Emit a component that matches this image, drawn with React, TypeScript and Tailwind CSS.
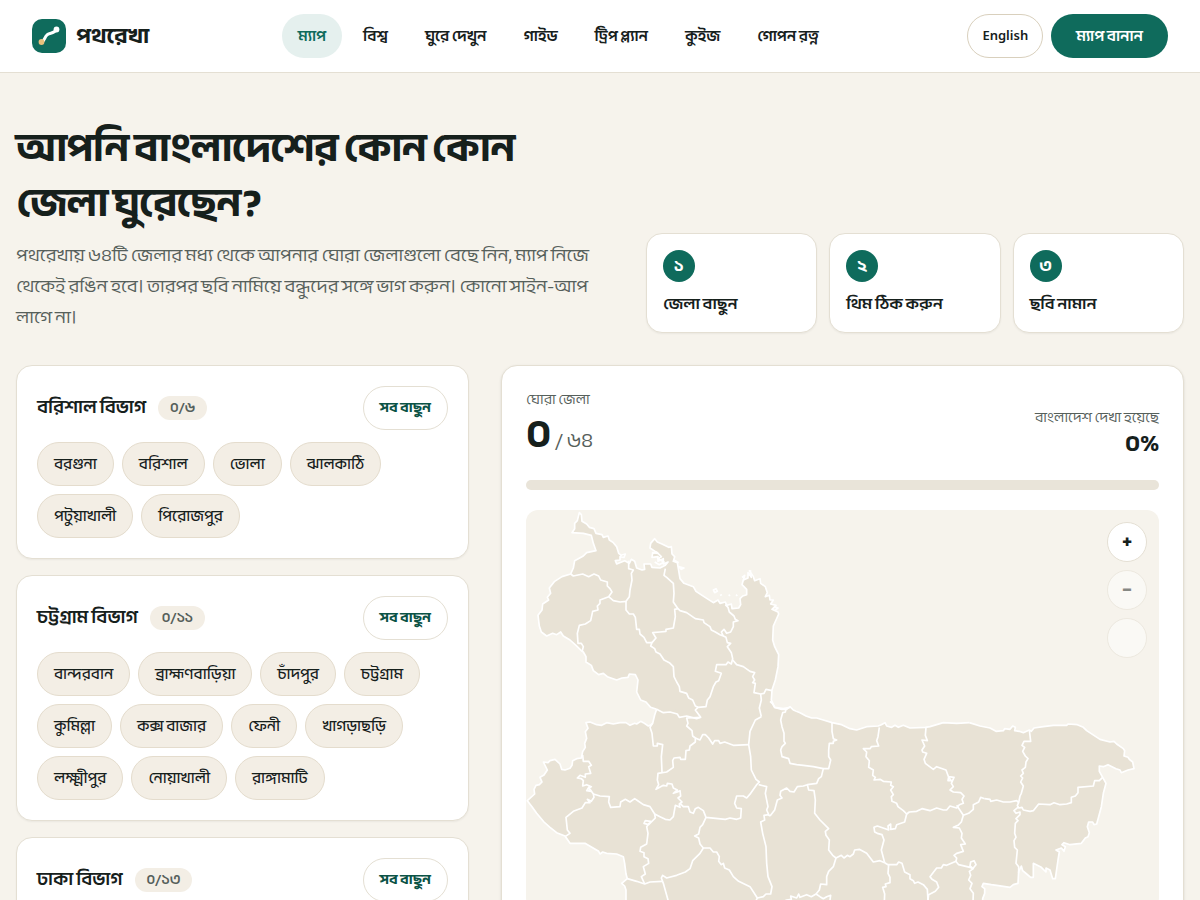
import { useState } from "react";

type Division = {
  name: string;
  total: string;
  districts: string[];
};

const navItems = ["ম্যাপ", "বিশ্ব", "ঘুরে দেখুন", "গাইড", "ট্রিপ প্ল্যান", "কুইজ", "গোপন রত্ন"];

const steps = [
  { number: "১", label: "জেলা বাছুন" },
  { number: "২", label: "থিম ঠিক করুন" },
  { number: "৩", label: "ছবি নামান" },
];

const divisions: Division[] = [
  {
    name: "বরিশাল বিভাগ",
    total: "৬",
    districts: ["বরগুনা", "বরিশাল", "ভোলা", "ঝালকাঠি", "পটুয়াখালী", "পিরোজপুর"],
  },
  {
    name: "চট্টগ্রাম বিভাগ",
    total: "১১",
    districts: [
      "বান্দরবান",
      "ব্রাহ্মণবাড়িয়া",
      "চাঁদপুর",
      "চট্টগ্রাম",
      "কুমিল্লা",
      "কক্স বাজার",
      "ফেনী",
      "খাগড়াছড়ি",
      "লক্ষ্মীপুর",
      "নোয়াখালী",
      "রাঙ্গামাটি",
    ],
  },
  { name: "ঢাকা বিভাগ", total: "১৩", districts: [] },
];

// Each region has its own origin; coast is the open shoreline, close is what fills it in.
const regions = [
  {
    id: "north-west",
    transform: "translate(-18 -30)",
    coast:
      "M410,628 392,622 378,606 362,600 350,576 354,540 346,524 328,522 324,532 306,534 290,540 262,530 250,520 236,524 220,512 214,496 198,486 198,470 190,456 184,452 168,436 150,420 130,408 122,396 110,404 98,400 80,408 64,396 58,378 54,346 66,330 68,312 86,300 82,292 92,280 88,264 104,244 126,230 152,222 160,204 164,182 190,168 200,158 228,152 220,130 214,106 190,100 156,98 164,86 164,70 172,62 178,38 184,44 186,64 200,72 208,82 222,86 228,100 246,104 250,112 264,108 268,120 280,128 290,140 296,160 304,166 316,162 312,172 300,170 300,180 286,182 290,192 314,182 328,190 334,178 344,184 350,204 366,210 374,208 372,192 392,192 396,202 420,204 436,196 444,186 430,192 430,176 414,184 414,170 396,172 398,158 414,160 402,152 390,144 392,130 404,116 412,126 426,132 446,142 454,140 456,162 464,170 460,184 472,188 474,200 480,236 492,250 520,260 528,274 552,290 580,308 594,300 600,310 616,306 620,316 634,312 636,326 656,324 662,314 660,296 668,288 680,284 680,268 666,254 670,240 684,234 684,218 694,232 690,214 700,230 704,242 720,236 722,250 736,260 742,278 736,290 748,286 750,300 760,300 752,312 768,316 756,328 774,336 776,342 760,378 758,420 764,440 776,464 774,500 766,540 756,570 754,600 764,622 790,626 810,622",
    close: "V660 H410 Z",
    borders: [
      "M152,222 160,228 188,222 206,230 222,222 236,228 242,240 262,246 262,258 270,266 276,276 266,290 240,300 240,310 232,318 234,330 218,334 212,362 196,372 178,376 172,400 174,430 184,430 190,440 186,456",
      "M266,290 280,302 300,306 318,304 328,290 330,270 336,240 334,220 340,210 326,206 326,182",
      "M318,304 318,330 328,342 340,342 346,352 350,388 358,388 360,402 372,412 380,428 396,428 392,438 404,446 408,456 420,462 432,480 448,488 460,500 462,530 470,546 478,560 480,574 500,580 506,594 518,600 526,618 534,622",
      "M396,428 408,414 398,398 420,396 438,394 438,388 460,384 466,350 464,328 474,326 460,306 462,280 460,250 440,232 432,226 436,206",
      "M474,326 480,332 500,338 526,356 550,360 552,368 570,380 574,390 586,396 600,404 610,408 604,396 612,388 620,400 632,396 640,380 640,366 654,362 646,358 642,348 628,336 624,322 616,314",
      "M610,408 618,412 622,428 632,430 622,440 634,458 638,476 634,492 624,486 618,494 590,494 586,514 604,520 596,542 588,546 580,560 570,590 562,600 558,620 534,622 526,630 542,652 530,656 500,648 478,652 472,642 450,636 430,638 410,628",
      "M638,480 650,494 670,500 690,514 704,518 698,530 704,540 698,548 706,550 702,578 722,582 732,580 738,568 756,572",
      "M722,582 724,600 718,624 724,650",
      "M580,270 l8,-4 4,8 -8,4Z M600,286 l6,-2 M626,284 l4,4 M648,284 l4,4 M476,200 l16,4 -8,4Z M462,180 l14,8 M396,160 l14,-4 14,14 -10,6 18,10 -14,8 -14,-8 M666,232 l8,-6 -4,16 M686,212 l8,2 M764,320 l10,4 -8,6",
    ],
  },
  {
    id: "south-west",
    transform: "translate(-18 540)",
    coast:
      "M410,58 404,75 398,100 390,106 385,108 370,98 362,94 350,102 344,100 330,106 318,98 300,98 280,102 260,98 245,106 230,104 210,96 198,98 204,115 196,125 200,145 194,160 196,172 188,185 184,204 170,206 158,212 156,226 150,235 135,240 125,238 120,222 105,208 90,212 84,218 70,216 82,240 72,255 60,262 66,276 58,284 48,286 42,298 44,312 22,332 36,350 50,370 72,396 90,412 110,428 135,438 150,460 195,460 236,484 240,492 248,486 260,490 290,492 310,500 314,520 318,552 322,566 305,580 314,588 318,600 318,660",
    close: "H830 V60 Z",
    borders: [
      "M542,82 500,84 504,100 500,108 516,122 518,138 526,144 526,156 510,168 508,180 498,182 496,208 482,208 480,202 462,204 458,212 460,232 440,246 414,250 412,270 416,284 408,298 430,286 440,288 442,280 456,282 460,294 472,300 460,310 472,306 480,302 482,318 474,324 486,336 478,342 480,352 466,346 460,380 450,390 436,388 420,380 404,372 390,350 370,344 350,330 344,326 330,336 316,328 302,336 300,350 272,352 266,336 268,320 240,318 220,312",
      "M188,195 190,214 206,214 214,226 206,230 212,250 196,252 196,262 180,256 172,264 184,266 190,272 188,288 200,284 214,290 206,296 214,304 200,302 206,292 220,312 222,322 214,334 202,328 210,338 196,338 186,354 160,364 138,382 142,420 150,430 135,440",
      "M398,100 390,112 396,130 400,168 412,168 412,160 428,164 424,200 426,246",
      "M526,144 540,150 548,134 556,134 566,144 578,162 584,152 596,152 600,160 614,156 640,166 686,164",
      "M724,80 706,90 690,124 686,164 692,200 694,240 708,268 718,276 710,284 692,310 680,324 670,318 650,318 644,340 650,354 664,356 662,384 650,388 630,384 616,388 558,382 550,362 535,352 526,356 520,370 510,366 505,350 490,350 480,340",
      "M558,382 548,404 540,412 536,432 524,438 536,444 540,462 550,474 540,490 518,512 510,536 496,546 470,556 440,564 428,556 424,564 430,580 444,630 446,660",
      "M426,574 390,576 374,582 350,574 322,566",
      "M404,372 406,384 386,404 372,400 376,392 392,394 380,410 384,430 380,462 362,472 360,484 372,488 372,500 384,506 386,520 370,530 376,552 364,560 374,582",
      "M550,474 570,474 580,486 590,486 598,500 596,514 604,524 610,520 614,534 628,540 640,560 656,574 690,590 712,624 704,640",
      "M716,284 740,290 736,310 744,350 740,360 746,374 732,376 734,390 722,396 728,430 738,470 740,520 744,560 756,590 752,612 738,612 730,620 712,624",
      "M744,374 750,378",
    ],
  },
  {
    id: "central",
    transform: "translate(732 540)",
    coast:
      "M0,34 8,42 14,52 35,58 50,58 60,50 70,60 90,68 108,78 125,84 140,84 160,90 186,98 215,104 240,116 260,120 290,110 325,108 334,104 345,98 350,108 365,112 375,106 385,112 400,106 420,114 466,112 480,110 500,104 520,98 560,100 598,98",
    close: "V660 H0 Z",
    borders: [
      "M48,56 46,66 38,68 32,90 36,110 42,130 42,154 46,160 36,170 32,180 36,200 56,206 60,220 80,224 100,226 130,230 160,236 154,260 146,266 140,280 112,284 100,288 82,290 72,306 60,304 50,294 32,304 30,316 36,324 22,330 14,360 0,378",
      "M186,98 186,124 190,146 200,150 190,154 190,160 178,160 176,180 176,200 182,210 176,236 160,236",
      "M112,284 116,300 132,302 136,330 134,370 150,390 176,416 166,424 168,436 178,450 176,480 188,496 198,504 214,496 222,504 232,496 240,500 250,492 254,480 268,478 290,490 310,516 330,512 344,518",
      "M328,112 324,140 320,152 326,168 304,170 300,176 280,176 290,186 288,200 298,212 296,232 310,240 308,256 316,262 312,270 330,268 340,274 364,276 362,286 370,290 362,300 370,314 364,320 366,334 380,340 384,350 400,362 410,372 404,396 380,404 376,416 362,418 362,402 354,408 356,420 346,416 322,408 312,412 314,426 322,430 336,434 342,450 334,480 344,518",
      "M410,372 418,366 440,364 456,356 480,362 500,354 520,360 530,360 540,348 560,354 568,344 580,340 576,328 582,318 572,308 550,306 540,300 550,290 544,280 552,262 536,260 534,272 544,272 536,262 528,240 500,230 490,238 466,220 462,208 470,190 458,186 456,180 464,168 456,150 472,152 466,136 468,112",
      "M560,346 568,358 580,376 596,370 610,358 610,344 626,336 632,322 644,326",
      "M580,376 574,396 564,406 550,412 568,414 576,430 574,444 586,462 572,464 580,484 560,490 552,496 560,504 558,514 530,526 520,524 514,534 500,534 480,560 486,568 500,576 506,592 496,604 476,614 474,630",
      "M556,512 566,524 600,532 608,536 618,524 612,512 602,516 600,528 610,536 598,544 602,556 596,570 606,580 600,596 610,610 608,660",
      "M344,518 354,524 380,524 386,516 396,520 404,546 420,554 420,566 430,572 434,580 444,576 460,584 472,598 474,630",
      "M356,524 354,550 360,562 360,578 346,582 348,590 338,592 344,612 342,660",
      "M198,504 190,530 176,544 170,560 170,584 152,582 148,600 138,612 124,620 110,614 90,622 86,612 80,624 62,618 64,628 50,630 30,640",
      "M138,612 150,620 160,626 170,620 182,616 180,630",
    ],
  },
  {
    id: "east",
    transform: "translate(1302 540)",
    coast:
      "M28,98 60,108 90,114 108,124 130,122 134,116 150,118 158,108 166,112 164,122 178,124 190,128 208,120 214,124 222,114 250,110 280,106 320,106 324,102 352,104 370,112 380,122 420,148 450,156 462,154 470,162 490,176 494,182 492,198 504,202 508,208 518,216 522,236 504,240 484,248 480,240 468,236 444,224 430,230 418,228 418,244 428,262 438,280 430,310 424,350 416,380 410,402 402,404 398,396 386,396 382,410 388,428 384,440 376,444 364,460 330,464 312,458 306,464 316,470 312,484 304,474 288,480 298,486 294,510 286,566 278,566 270,540 258,534 258,546 244,532 220,520 220,562 212,562 200,552 188,542 184,528 176,545 174,580 160,584 150,592 110,586 94,584 70,580 66,590 74,596 74,610 68,626 68,660",
    close: "H0 V98 Z",
    borders: [
      "M74,326 90,328 92,334 110,330 130,336 150,336 170,332 176,338",
      "M208,120 212,154 192,154 186,166 194,172 188,184 196,198 204,206 198,216 196,232 186,240 190,250 182,258 188,264 182,276 190,288 184,310 180,318 176,338 172,346 176,354 186,352 190,360 210,364 220,362 236,342 270,344 282,338 300,344 320,342 334,338 334,322 346,318 354,308 354,292 400,288 404,272 418,272 428,262",
      "M176,350 162,362 168,370 180,366 180,374 168,386 174,392 166,400 164,430 168,442 162,452 164,472 172,480 168,520 176,530 176,550",
    ],
  },
];

const Logo = () => (
  <svg viewBox="0 0 34 34" className="size-[34px]" aria-hidden="true">
    <rect width="34" height="34" rx="10" fill="#0f6b5c" />
    <path
      d="M9.5 23 C13 22 12 18 15.5 15.5 C18 13.5 22 15 24.5 10.5"
      fill="none"
      stroke="#fff"
      strokeWidth="3"
      strokeLinecap="round"
    />
    <circle cx="24.5" cy="10.5" r="2.9" fill="#fff" />
    <circle cx="9.5" cy="23" r="2.9" fill="#e9c07c" />
  </svg>
);

const Navbar = () => (
  <header className="border-b border-[#e4dfd3] bg-white">
    <div className="flex h-[72px] items-center justify-between px-8">
      <a href="#" className="flex items-center gap-2.5 text-[22px] font-bold">
        <Logo />
        পথরেখা
      </a>
      <nav className="flex items-center gap-[5px]">
        {navItems.map((item, index) => (
          <a
            key={item}
            href="#"
            className={
              index === 0
                ? "flex h-11 items-center rounded-full bg-[#e5f0ee] px-4 text-[15px] font-semibold text-[#0f6b5c]"
                : "flex h-11 items-center rounded-full px-4 text-[15px] font-semibold"
            }
          >
            {item}
          </a>
        ))}
      </nav>
      <div className="flex items-center gap-2">
        <button
          type="button"
          className="h-11 rounded-full border border-[#d9d0bd] px-3.5 font-['Noto_Sans',sans-serif] text-[13px] font-semibold"
        >
          English
        </button>
        <button type="button" className="h-11 rounded-full bg-[#0f6b5c] px-[25px] text-[15px] font-semibold text-white">
          ম্যাপ বানান
        </button>
      </div>
    </div>
  </header>
);

const DivisionCard = ({ name, total, districts }: Division) => (
  <section className="flex flex-col gap-3 rounded-2xl border border-[#e4dfd3] bg-white p-5 shadow-xs">
    <div className="flex items-center justify-between">
      <div className="flex items-center gap-3">
        <h2 className="text-lg font-semibold">{name}</h2>
        <span className="rounded-full bg-[#f3eee5] px-3 text-sm leading-6 font-semibold text-[#56605b]">০/{total}</span>
      </div>
      <button
        type="button"
        className="h-11 rounded-full border border-[#e4dfd3] px-4 text-sm font-bold text-[#0b5346]"
      >
        সব বাছুন
      </button>
    </div>
    <div className="flex flex-wrap gap-2">
      {districts.map((district) => (
        <button
          key={district}
          type="button"
          className="h-11 rounded-full border border-[#e4dccd] bg-[#f3eee5] px-4 text-[15px] font-medium"
        >
          {district}
        </button>
      ))}
    </div>
  </section>
);

const DistrictMap = () => (
  <svg viewBox="0 0 1899 1200" className="block w-full" role="img" aria-label="বাংলাদেশ">
    <g fill="#e8e2d5">
      {regions.map((region) => (
        <path key={region.id} transform={region.transform} d={`${region.coast} ${region.close}`} />
      ))}
    </g>
    <g fill="none" stroke="#fff" strokeWidth="5" strokeLinejoin="round">
      {regions.map((region) => (
        <g key={region.id} transform={region.transform}>
          <path d={region.coast} />
          {region.borders.map((border) => (
            <path key={border} d={border} />
          ))}
        </g>
      ))}
    </g>
  </svg>
);

const MapPanel = () => {
  const [zoom, setZoom] = useState(1);
  const zoomButton =
    "size-10 rounded-full border border-[#e4dfd3] bg-white text-xl leading-none font-bold disabled:opacity-50";

  return (
    <section className="rounded-2xl border border-[#e4dfd3] bg-white p-6 shadow-sm">
      <div className="flex items-end justify-between">
        <div>
          <p className="text-sm leading-5 text-[#56605b]">ঘোরা জেলা</p>
          <p className="text-[40px] leading-[50px] font-bold">
            ০<span className="text-xl font-normal text-[#56605b]"> / ৬৪</span>
          </p>
        </div>
        <div className="text-right">
          <p className="text-sm leading-5 text-[#56605b]">বাংলাদেশ দেখা হয়েছে</p>
          <p className="text-2xl leading-8 font-bold">০%</p>
        </div>
      </div>
      <div className="my-5 h-2.5 rounded-full bg-[#e9e4d9]" />
      <div className="relative overflow-hidden rounded-xl bg-[#f6f3ec]">
        <DistrictMap />
        <div className="absolute top-3 right-3 flex flex-col gap-2">
          <button type="button" className={zoomButton} onClick={() => setZoom(zoom + 1)}>
            +
          </button>
          <button type="button" className={zoomButton} disabled={zoom === 1} onClick={() => setZoom(zoom - 1)}>
            −
          </button>
          <button type="button" className={zoomButton} disabled={zoom === 1} onClick={() => setZoom(1)} />
        </div>
      </div>
    </section>
  );
};

const App = () => (
  <div className="min-h-screen bg-[#f6f3ec] font-['Anek_Bangla','Baloo_Da_2','Noto_Sans_Bengali','Noto_Sans',sans-serif] text-[#16201c]">
    <Navbar />
    <main className="px-4 pt-12 pb-8">
      <div className="grid grid-cols-[10fr_9fr] items-end gap-8">
        <div>
          <h1 className="max-w-[580px] text-[40px] leading-[55px] font-bold tracking-tight">
            আপনি বাংলাদেশের কোন কোন জেলা ঘুরেছেন?
          </h1>
          <p className="mt-[9px] text-lg leading-[31px] text-[#56605b]">
            পথরেখায় ৬৪টি জেলার মধ্য থেকে আপনার ঘোরা জেলাগুলো বেছে নিন, ম্যাপ নিজে থেকেই রঙিন হবে। তারপর ছবি নামিয়ে
            বন্ধুদের সঙ্গে ভাগ করুন। কোনো সাইন-আপ লাগে না।
          </p>
        </div>
        <ol className="grid grid-cols-3 gap-3">
          {steps.map((step) => (
            <li key={step.number} className="rounded-2xl border border-[#e4dfd3] bg-white p-4 shadow-xs">
              <span className="flex size-8 items-center justify-center rounded-full bg-[#0f6b5c] font-bold text-white">
                {step.number}
              </span>
              <p className="mt-2.5 text-base leading-6 font-semibold">{step.label}</p>
            </li>
          ))}
        </ol>
      </div>

      <div className="mt-8 grid grid-cols-[453fr_683fr] items-start gap-8">
        <div className="flex flex-col gap-4">
          {divisions.map((division) => (
            <DivisionCard key={division.name} {...division} />
          ))}
        </div>
        <MapPanel />
      </div>
    </main>
  </div>
);

export default App;
